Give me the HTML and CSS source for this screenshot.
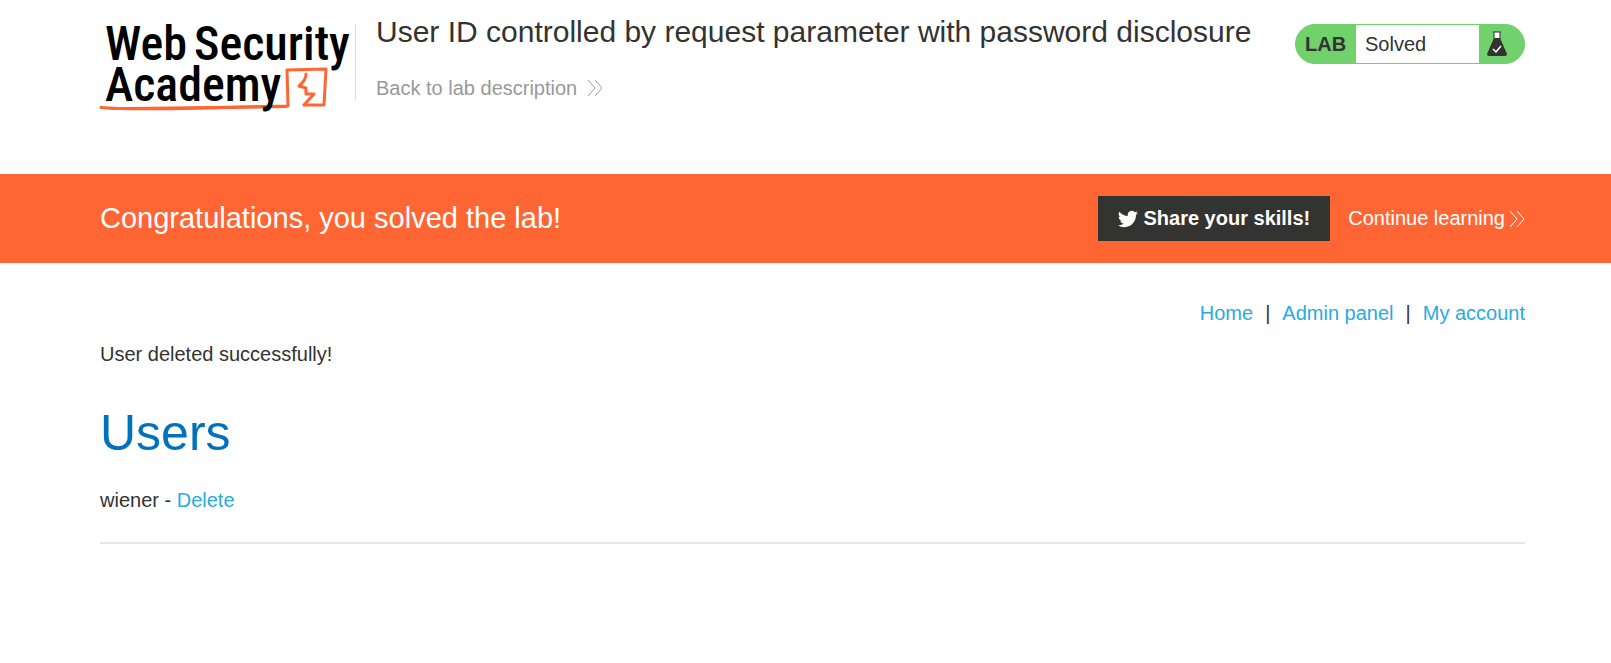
FILE: index.html
```html
<!DOCTYPE html>
<html lang="en">
<head>
<meta charset="utf-8">
<title>User ID controlled by request parameter with password disclosure</title>
<link rel="stylesheet" href="styles.css">
</head>
<body>
<header class="lab-header container">
  <a class="logo" href="#" aria-label="Web Security Academy">
    <svg class="logo-art" viewBox="0 0 255 90" width="255" height="90">
      <path d="M1 83.500 C40 87 120 83 188 82 L187 46 L226 45 L224 81 L204 81" fill="none" stroke="#ff6633" stroke-width="3" stroke-linejoin="round" stroke-linecap="round"/>
      <path d="M1 83 L30 83 L187 81 V84 L60 86 L12 86z" fill="#ff6633"/>
      <path d="M206 50 Q206 56 199 62 L206 64 V70 L214 70 L204 81" fill="none" stroke="#ff6633" stroke-width="3" stroke-linejoin="round" stroke-linecap="round"/>
      <g class="logo-text">
        <text x="5" y="36">Web</text>
        <text x="94" y="36">Security</text>
        <text x="5" y="77">Academy</text>
      </g>
    </svg>
  </a>
  <div class="title-block">
    <h2 class="lab-title">User ID controlled by request parameter with password disclosure</h2>
    <a class="back-link" href="#">Back to lab description
      <svg class="chevrons" viewBox="1 0 15 18" width="15" height="18"><path d="M1 1l7 8-7 8M8 1l7 8-7 8"/></svg>
    </a>
  </div>
  <div class="status">
    <span class="status-label">LAB</span>
    <span class="status-text">Solved</span>
    <span class="status-icon">
      <svg viewBox="0 0 20 26" width="20" height="26">
        <path d="M7 1h6v7H7z" fill="#fff"/>
        <path d="M6 1h8M7 1v7M13 1v7" stroke="#333332" fill="none"/>
        <path d="M7 7h6l7 16q0 2-2 2H2q-2 0-2-2z" fill="#333332"/>
        <path d="M6 18l3 3 5-6" fill="none" stroke="#fff" stroke-width="1.500"/>
      </svg>
    </span>
  </div>
</header>
<section class="banner">
  <div class="banner-row container">
    <h4 class="banner-title">Congratulations, you solved the lab!</h4>
    <div class="banner-actions">
      <button class="share" type="button">
        <svg viewBox="0 0 24 24" width="20" height="20"><path fill="#fff" d="M23.95 4.57a10 10 0 0 1-2.82.77 4.96 4.96 0 0 0 2.16-2.72c-.95.55-2 .95-3.12 1.18a4.92 4.92 0 0 0-8.39 4.48A13.98 13.98 0 0 1 1.64 3.16a4.92 4.92 0 0 0 1.52 6.57 4.9 4.9 0 0 1-2.23-.61v.06a4.92 4.92 0 0 0 3.95 4.83 5 5 0 0 1-2.21.08 4.94 4.94 0 0 0 4.6 3.42A9.87 9.87 0 0 1 0 19.54a13.94 13.94 0 0 0 7.55 2.21c9.05 0 14-7.5 14-13.98 0-.21 0-.42-.02-.63a9.94 9.94 0 0 0 2.42-2.57z"/></svg>
        <span>Share your skills!</span>
      </button>
      <a class="continue" href="#">Continue learning
        <svg class="chevrons" viewBox="1 0 15 18" width="15" height="18"><path d="M1 1l7 8-7 8M8 1l7 8-7 8"/></svg>
      </a>
    </div>
  </div>
</section>
<main class="content container">
  <nav class="top-links">
    <a href="#">Home</a><span>|</span><a href="#">Admin panel</a><span>|</span><a href="#">My account</a>
  </nav>
  <p class="message">User deleted successfully!</p>
  <h1 class="heading">Users</h1>
  <div class="user">wiener - <a href="#">Delete</a></div>
  <hr class="rule">
</main>
</body>
</html>
```
FILE: styles.css
```css
* { box-sizing: border-box; }
body {
  margin: 0;
  background: #fff;
  color: #333332;
  font-family: "Liberation Sans", Arial, sans-serif;
  font-size: 20px;
  line-height: 24px;
}
a { color: #29abe2; text-decoration: none; }
.container { padding-left: 100px; padding-right: 86px; }
.lab-header {
  display: flex;
  align-items: flex-start;
  padding-top: 24px;
  padding-bottom: 60px;
}
.logo { flex: none; height: 90px; }
.logo-art { display: block; overflow: visible; }
.logo-text { font: 500 48px "Roboto Condensed", "Liberation Sans Narrow", Roboto, sans-serif; fill: #000; }
.title-block {
  position: relative;
  flex: 1;
  margin-top: -12px;
  padding-left: 21px;
}
.title-block::before {
  content: "";
  position: absolute;
  left: 0;
  top: 12px;
  width: 1px;
  height: 77px;
  background: #ddd;
}
.lab-title { margin: 0 0 20px; font-size: 30px; font-weight: 400; line-height: 40px; }
.back-link { display: inline-flex; align-items: center; gap: 11px; color: #999; line-height: 32px; }
.chevrons { fill: none; stroke: currentColor; stroke-width: 1; }
.status {
  display: flex;
  flex: none;
  width: 230px;
  height: 40px;
  border: 1px solid #70d16d;
  border-radius: 20px;
  background: #70d16d;
  overflow: hidden;
  line-height: 38px;
}
.status-label { width: 60px; padding-left: 9px; font-weight: 700; }
.status-text { flex: 1; padding-left: 9px; background: #fff; }
.status-icon { display: flex; align-items: center; width: 45px; padding-left: 8px; }
.banner { background: #ff6633; color: #fff; }
.banner-row { display: flex; align-items: center; justify-content: space-between; padding-top: 22px; padding-bottom: 22px; }
.banner-title { margin: 0; font-size: 29px; font-weight: 400; line-height: 33px; }
.banner-actions { display: flex; align-items: center; gap: 18px; }
.share {
  display: flex;
  align-items: center;
  gap: 5px;
  height: 45px;
  padding: 0 20px;
  border: 0;
  background: #333332;
  color: #fff;
  font: 700 20px "Liberation Sans", Arial, sans-serif;
}
.continue { display: flex; align-items: center; gap: 5px; color: #fff; line-height: 23px; }
.content { padding-top: 37px; }
.top-links { display: flex; justify-content: flex-end; gap: 12px; line-height: 26px; }
.message { margin: 15px 0 0; line-height: 26px; }
.heading { margin: 36px 0 24px; color: #0071bc; font-size: 50px; font-weight: 400; line-height: 60px; }
.user { line-height: 26px; }
.rule { margin: 29px 0 0; border: 0; height: 2px; background: #e6e6e6; }
```
